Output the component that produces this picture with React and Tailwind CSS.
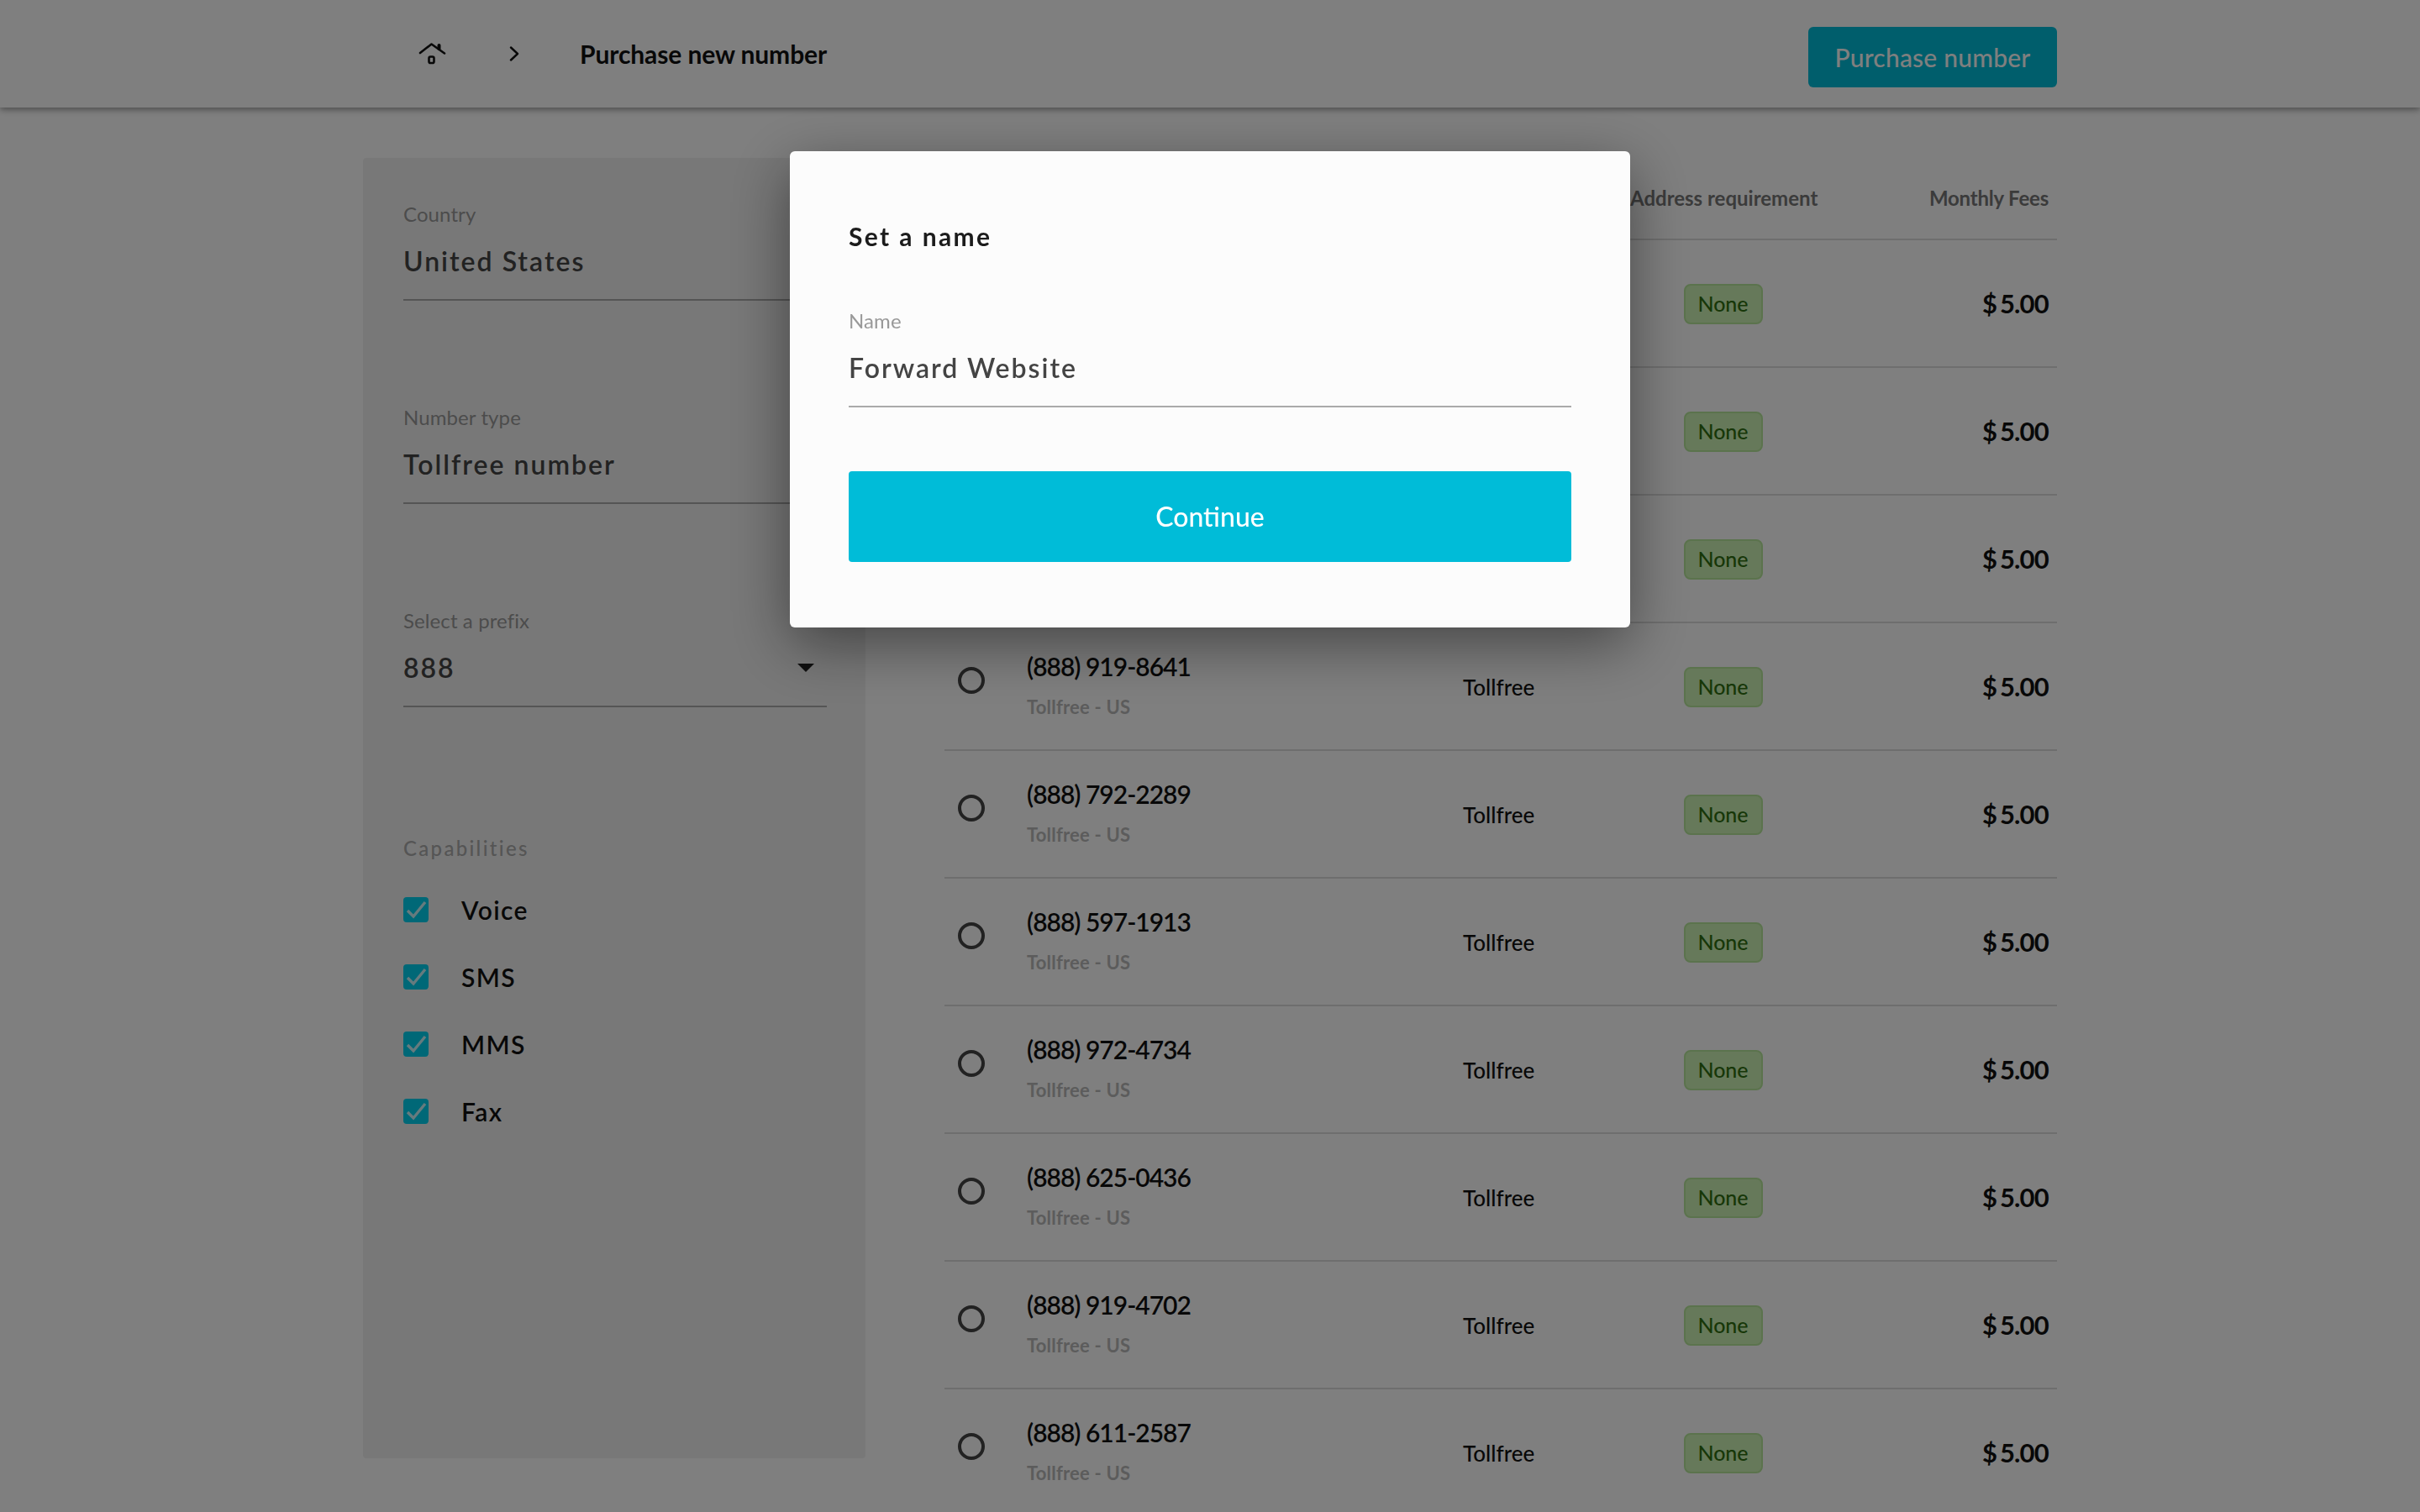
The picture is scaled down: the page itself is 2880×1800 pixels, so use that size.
const font = { fontFamily: '"Lato", "Liberation Sans", sans-serif' };

const rows = [
  ['(888) 412-7730'], ['(888) 305-1186'], ['(888) 746-9021'],
  ['(888) 919-8641'], ['(888) 792-2289'], ['(888) 597-1913'],
  ['(888) 972-4734'], ['(888) 625-0436'], ['(888) 919-4702'], ['(888) 611-2587'],
];

function HomeIcon() {
  return (
    <svg width="34" height="28" viewBox="0 0 34 28" fill="none" stroke="#111" strokeWidth="2.6" strokeLinecap="round" strokeLinejoin="round">
      <path d="M2 13 L15.5 2.5 L31 13.5" />
      <path d="M24.5 8 V4" strokeWidth="4" />
      <rect x="12.5" y="17.5" width="6" height="7.5" rx="1.8" />
    </svg>
  );
}

function Chevron() {
  return (
    <svg width="14" height="18" viewBox="0 0 14 18" fill="none" stroke="#111" strokeWidth="2.4" strokeLinecap="round" strokeLinejoin="round">
      <path d="M3 1.5 L11 9 L3 16.5" />
    </svg>
  );
}

function Field({ label, value, caret }) {
  return (
    <div className="flex flex-col border-b-2 border-[#aaaaaa] pb-[25px]">
      <div className="h-[30px] text-[24px] leading-[30px] tracking-[0.1px] text-[#999999]">{label}</div>
      <div className="mt-[21px] flex h-[40px] items-center justify-between">
        <span className="text-[32px] leading-[40px] font-semibold tracking-[2px] text-[#444444]">{value}</span>
        {caret && <span className="mr-[15px] h-0 w-0 border-x-[10px] border-t-[10px] border-x-transparent border-t-[#222222]" />}
      </div>
    </div>
  );
}

function Check({ label }) {
  return (
    <div className="flex h-[30px] items-center">
      <span className="flex h-[30px] w-[30px] items-center justify-center rounded-[4px] bg-[#00d0ee]">
        <svg width="26" height="24" viewBox="0 0 26 24" fill="none" stroke="#ffffff" strokeOpacity="0.8" strokeWidth="3.4">
          <path d="M3 13 L10 20 L24 3" />
        </svg>
      </span>
      <span className="ml-[39px] text-[30px] leading-[40px] font-semibold tracking-[1.4px] text-[#111111]">{label}</span>
    </div>
  );
}

function Row({ phone }) {
  return (
    <div className="grid h-[152px] grid-cols-[98px_519px_199px_221px_1fr] items-center border-b-2 border-[#dddddd]">
      <span className="ml-[16px] mb-[14px] h-[32px] w-[32px] rounded-full border-[4px] border-[#444444]" />
      <div className="mb-[6px] flex flex-col">
        <span className="text-[30px] leading-[40px] font-semibold tracking-[-1px] text-[#111111]">{phone}</span>
        <span className="mt-[15px] text-[22px] leading-[28px] font-bold tracking-[0.2px] text-[#b8b8b8]">Tollfree - US</span>
      </div>
      <span className="mt-[1px] text-[26px] leading-[34px] font-medium text-[#111111]">Tollfree</span>
      <div className="mt-[2px] flex justify-center">
        <span className="flex h-[48px] w-[94px] items-center justify-center rounded-[8px] border-2 border-[#b6e69a] bg-[#cdf2b4] text-[25px] font-medium text-[#2f6e10]">None</span>
      </div>
      <span className="pr-[10px] text-right text-[31px] leading-[40px] font-bold tracking-[-0.8px] [word-spacing:-3px] text-[#111111]">$ 5.00</span>
    </div>
  );
}

export default function App() {
  return (
    <div style={font} className="relative h-screen overflow-hidden bg-white">
      <header className="flex h-[128px] items-center justify-between pl-[498px] pr-[432px] shadow-[0_2px_8px_rgba(0,0,0,0.45)]">
        <div className="flex items-center">
          <HomeIcon />
          <span className="ml-[73px] flex"><Chevron /></span>
          <span className="ml-[71px] text-[30px] font-bold tracking-[-0.1px] text-[#111111]">Purchase new number</span>
        </div>
        <button className="mt-[8px] h-[72px] w-[296px] rounded-[6px] bg-[#00bcd8] text-[30px] font-medium tracking-[0.2px] text-white">Purchase number</button>
      </header>

      <main className="flex pt-[60px] pl-[432px]">
        <aside className="flex h-[1548px] w-[598px] flex-col rounded-[4px] bg-[#f1f1f1] pt-[52px] pl-[48px] pr-[46px]">
          <Field label="Country" value="United States" />
          <div className="mt-[124px]"><Field label="Number type" value="Tollfree number" /></div>
          <div className="mt-[124px]"><Field label="Select a prefix" value="888" caret /></div>
          <div className="mt-[153px] h-[30px] text-[24px] leading-[30px] font-medium tracking-[2.3px] text-[#aaaaaa]">Capabilities</div>
          <div className="mt-[43px] flex flex-col gap-[50px]">
            <Check label="Voice" />
            <Check label="SMS" />
            <Check label="MMS" />
            <Check label="Fax" />
          </div>
        </aside>

        <section className="ml-[94px] w-[1324px]">
          <div className="grid h-[98px] grid-cols-[98px_519px_199px_221px_1fr] items-center border-b-2 border-[#dddddd] text-[24px] font-bold text-[#777777]">
            <span />
            <span>Number</span>
            <span>Type</span>
            <span className="text-center whitespace-nowrap">Address requirement</span>
            <span className="pr-[10px] text-right tracking-[-0.2px]">Monthly Fees</span>
          </div>
          {rows.map(([p]) => <Row key={p} phone={p} />)}
        </section>
      </main>

      <div className="fixed inset-0 flex items-start justify-center bg-black/50 pt-[180px]">
        <div className="w-[1000px] rounded-[6px] bg-[#fcfcfc] px-[70px] pt-[81px] pb-[78px] shadow-[0_20px_70px_rgba(0,0,0,0.45)]">
          <h2 className="h-[40px] text-[30px] leading-[40px] font-bold tracking-[2.4px] text-[#1c1c1c]">Set a name</h2>
          <div className="mt-[66px]"><Field label="Name" value="Forward Website" /></div>
          <button className="mt-[76px] h-[108px] w-full rounded-[4px] bg-[#00bcd8] text-[32px] font-medium text-white">Continue</button>
        </div>
      </div>
    </div>
  );
}
